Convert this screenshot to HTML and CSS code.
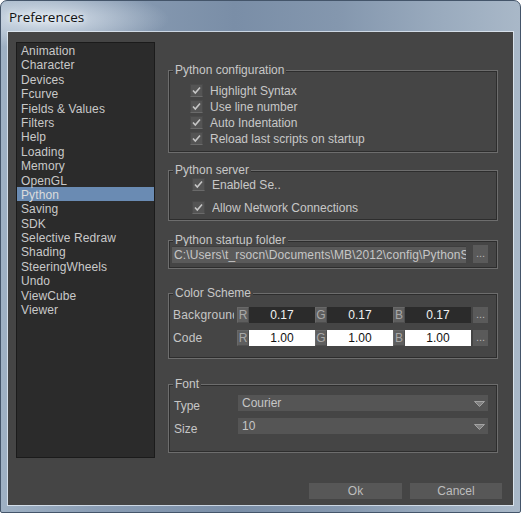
FILE: index.html
```html
<!DOCTYPE html>
<html>
<head>
<meta charset="utf-8">
<link rel="stylesheet" href="styles.css">
</head>
<body>
<div class="window">
  <div class="titlebar"><span class="title">Preferences</span></div>
  <div class="client">
    <ul class="list">
      <li>Animation</li>
      <li>Character</li>
      <li>Devices</li>
      <li>Fcurve</li>
      <li>Fields &amp; Values</li>
      <li>Filters</li>
      <li>Help</li>
      <li>Loading</li>
      <li>Memory</li>
      <li>OpenGL</li>
      <li class="sel">Python</li>
      <li>Saving</li>
      <li>SDK</li>
      <li>Selective Redraw</li>
      <li>Shading</li>
      <li>SteeringWheels</li>
      <li>Undo</li>
      <li>ViewCube</li>
      <li>Viewer</li>
    </ul>
    <div class="panel">
      <div class="group g-config">
        <div class="gtitle">Python configuration</div>
        <div class="checks">
          <div class="check"><svg class="cb" width="13" height="13" viewBox="0 0 13 13"><rect x="0.5" y="0.5" width="12" height="12" fill="#545454" stroke="#4a4a4a"/><line x1="0.5" y1="12.5" x2="12.5" y2="12.5" stroke="#6a6a6a"/><polyline points="3,6.5 5.3,9 10,3.5" fill="none" stroke="#c6c6c6" stroke-width="1.6"/></svg><span>Highlight Syntax</span></div>
          <div class="check"><svg class="cb" width="13" height="13" viewBox="0 0 13 13"><rect x="0.5" y="0.5" width="12" height="12" fill="#545454" stroke="#4a4a4a"/><line x1="0.5" y1="12.5" x2="12.5" y2="12.5" stroke="#6a6a6a"/><polyline points="3,6.5 5.3,9 10,3.5" fill="none" stroke="#c6c6c6" stroke-width="1.6"/></svg><span>Use line number</span></div>
          <div class="check"><svg class="cb" width="13" height="13" viewBox="0 0 13 13"><rect x="0.5" y="0.5" width="12" height="12" fill="#545454" stroke="#4a4a4a"/><line x1="0.5" y1="12.5" x2="12.5" y2="12.5" stroke="#6a6a6a"/><polyline points="3,6.5 5.3,9 10,3.5" fill="none" stroke="#c6c6c6" stroke-width="1.6"/></svg><span>Auto Indentation</span></div>
          <div class="check"><svg class="cb" width="13" height="13" viewBox="0 0 13 13"><rect x="0.5" y="0.5" width="12" height="12" fill="#545454" stroke="#4a4a4a"/><line x1="0.5" y1="12.5" x2="12.5" y2="12.5" stroke="#6a6a6a"/><polyline points="3,6.5 5.3,9 10,3.5" fill="none" stroke="#c6c6c6" stroke-width="1.6"/></svg><span>Reload last scripts on startup</span></div>
        </div>
      </div>

      <div class="group g-server">
        <div class="gtitle">Python server</div>
        <div class="check srv1"><svg class="cb" width="13" height="13" viewBox="0 0 13 13"><rect x="0.5" y="0.5" width="12" height="12" fill="#545454" stroke="#4a4a4a"/><line x1="0.5" y1="12.5" x2="12.5" y2="12.5" stroke="#6a6a6a"/><polyline points="3,6.5 5.3,9 10,3.5" fill="none" stroke="#c6c6c6" stroke-width="1.6"/></svg><span>Enabled Se..</span></div>
        <div class="check srv2"><svg class="cb" width="13" height="13" viewBox="0 0 13 13"><rect x="0.5" y="0.5" width="12" height="12" fill="#545454" stroke="#4a4a4a"/><line x1="0.5" y1="12.5" x2="12.5" y2="12.5" stroke="#6a6a6a"/><polyline points="3,6.5 5.3,9 10,3.5" fill="none" stroke="#c6c6c6" stroke-width="1.6"/></svg><span class="clipname">Allow Network Connections</span></div>
      </div>

      <div class="group g-folder">
        <div class="gtitle">Python startup folder</div>
        <div class="folder-row">
          <div class="pathfield"><span>C:\Users\t_rsocn\Documents\MB\2012\config\PythonS</span></div>
          <div class="dots">...</div>
        </div>
      </div>

      <div class="group g-color">
        <div class="gtitle">Color Scheme</div>
        <div class="crow">
          <div class="clabel">Background</div>
          <div class="ch">R</div><div class="cval dark">0.17</div>
          <div class="ch">G</div><div class="cval dark">0.17</div>
          <div class="ch">B</div><div class="cval dark">0.17</div>
          <div class="dots">...</div>
        </div>
        <div class="crow">
          <div class="clabel">Code</div>
          <div class="ch">R</div><div class="cval light">1.00</div>
          <div class="ch">G</div><div class="cval light">1.00</div>
          <div class="ch">B</div><div class="cval light">1.00</div>
          <div class="dots">...</div>
        </div>
      </div>

      <div class="group g-font">
        <div class="gtitle">Font</div>
        <div class="frow">
          <div class="flabel">Type</div>
          <div class="combo"><span>Courier</span><svg class="arrow" width="11" height="6" viewBox="0 0 11 6"><polygon points="0.5,0.5 10.5,0.5 5.5,5.5" fill="#808080" stroke="#a2a2a2" stroke-width="1"/></svg></div>
        </div>
        <div class="frow">
          <div class="flabel">Size</div>
          <div class="combo"><span>10</span><svg class="arrow" width="11" height="6" viewBox="0 0 11 6"><polygon points="0.5,0.5 10.5,0.5 5.5,5.5" fill="#808080" stroke="#a2a2a2" stroke-width="1"/></svg></div>
        </div>
      </div>

      <div class="buttons">
        <div class="btn ok">Ok</div>
        <div class="btn cancel">Cancel</div>
      </div>
    </div>
  </div>
</div>
</body>
</html>
```

FILE: styles.css
```css
* { box-sizing: border-box; }
html, body { margin: 0; padding: 0; }
body {
  width: 521px;
  height: 513px;
  overflow: hidden;
  background: #ffffff;
  font-family: "Liberation Sans", Arial, sans-serif;
  font-size: 12px;
  color: #c8c8c8;
}
.window {
  width: 521px;
  height: 513px;
  border: 1px solid #44556a;
  border-radius: 7px 7px 2px 2px;
  background:
    radial-gradient(ellipse 120px 30px at 48px 18px, rgba(228,236,244,0.85), rgba(228,236,244,0) 100%),
    linear-gradient(90deg, #9fb1c4 0%, #8a9db4 18%, #7a8ea7 45%, #8497ae 65%, #9aabbe 85%, #a9b8c8 100%);
  padding: 0 7px 7px 7px;
  display: flex;
  flex-direction: column;
}
.titlebar {
  height: 31px;
  display: flex;
  align-items: center;
  padding-left: 1px;
  padding-top: 1px;
}
.title {
  font-family: "Open Sans", "Liberation Sans", sans-serif;
  font-size: 13.5px;
  color: #111;
  text-shadow: 0 0 8px #eef3f8, 0 0 4px #eef3f8;
}
.client {
  flex: 1;
  background: #454545;
  box-shadow: 0 0 0 1px rgba(235,242,250,0.7);
  display: flex;
  align-items: flex-start;
  padding: 10px 0 0 8px;
}
.list {
  list-style: none;
  margin: 0;
  padding: 0;
  width: 139px;
  height: 416px;
  background: #2b2b2b;
  border: 1px solid #1b1b1b;
  flex: none;
}
.list li {
  height: 14.4px;
  line-height: 14.4px;
  padding-top: 1px;
  padding-left: 4px;
  color: #c9c9c9;
  white-space: nowrap;
  letter-spacing: 0.1px;
}
.list li.sel {
  background: #6a8bb3;
  color: #dcdcdc;
}
.panel {
  margin-left: 13px;
  width: 330px;
  flex: none;
}
.group {
  border: 1px solid #6d6d6d;
  box-shadow: inset 1px 1px 0 #2d2d2d, inset -1px -1px 0 #2d2d2d;
}
.gtitle {
  width: fit-content;
  height: 14px;
  line-height: 14px;
  margin: -8px 0 0 4px;
  padding: 0 2px;
  background: #454545;
  color: #c8c8c8;
}
.g-config { margin-top: 28px; height: 83px; }
.g-server { margin-top: 17px; height: 51px; }
.g-folder { margin-top: 19px; height: 29px; }
.g-color  { margin-top: 24px; height: 66px; }
.g-font   { margin-top: 25px; height: 69px; }

.checks { margin-top: 5px; }
.check {
  height: 16px;
  display: flex;
  align-items: center;
  padding-left: 21px;
  white-space: nowrap;
}
.check span { padding-top: 1px; }
.cb { flex: none; margin-right: 7px; }
.srv1 { margin-top: -1px; padding-left: 23px; }
.srv2 { margin-top: 7px; padding-left: 23px; }
.clipname {
  display: block;
  width: 147px;
  overflow: hidden;
}

.folder-row {
  display: flex;
  align-items: center;
  margin-top: -2px;
  padding-left: 3px;
}
.pathfield {
  width: 294px;
  height: 17px;
  line-height: 16px;
  background: #5a5a5a;
  border-top: 1px solid #3e3e3e;
  padding-left: 2px;
  white-space: nowrap;
  overflow: hidden;
  color: #c6c6c6;
  letter-spacing: 0.12px;
}
.dots {
  width: 15px;
  height: 18px;
  margin-left: 7px;
  background: #5a5a5a;
  color: #b8b8b8;
  font-size: 11px;
  text-align: center;
  line-height: 16px;
  flex: none;
}

.crow {
  display: flex;
  align-items: center;
  height: 16px;
  margin-top: 7px;
}
.clabel {
  width: 65px;
  margin-right: 3px;
  padding-left: 4px;
  white-space: nowrap;
  overflow: hidden;
  flex: none;
  color: #c6c6c6;
  letter-spacing: 0.2px;
}
.ch {
  width: 12px;
  height: 16px;
  background: #5e5e5e;
  border: 1px solid #686868;
  border-right-color: #4e4e4e;
  border-bottom-color: #4e4e4e;
  color: #a8a8a8;
  font-size: 12px;
  text-align: center;
  flex: none;
  line-height: 15px;
}
.cval {
  width: 66px;
  height: 16px;
  line-height: 17px;
  text-align: center;
  flex: none;
}
.cval.dark { background: #2b2b2b; color: #f2f2f2; }
.cval.light { background: #ffffff; color: #111; }
.crow .dots { margin-left: 2px; height: 16px; line-height: 14px; }

.frow {
  display: flex;
  align-items: flex-start;
  height: 16px;
  margin-top: 4px;
}
.frow + .frow { margin-top: 7px; }
.flabel {
  width: 69px;
  padding-left: 5px;
  padding-top: 4px;
  line-height: 14px;
  flex: none;
  color: #c6c6c6;
}
.combo {
  width: 250px;
  height: 16px;
  background: #555555;
  display: flex;
  align-items: center;
  justify-content: space-between;
  padding: 0 2px 0 4px;
  line-height: 16px;
  color: #c6c6c6;
}
.arrow { flex: none; margin-right: 1px; margin-top: 1px; }

.buttons {
  display: flex;
  gap: 8px;
  margin-top: 30px;
  padding-left: 141px;
}
.btn {
  height: 16px;
  line-height: 17px;
  background: #575757;
  color: #bdbdbd;
  text-align: center;
  flex: none;
}
.btn.ok { width: 93px; }
.btn.cancel { width: 92px; }
```
